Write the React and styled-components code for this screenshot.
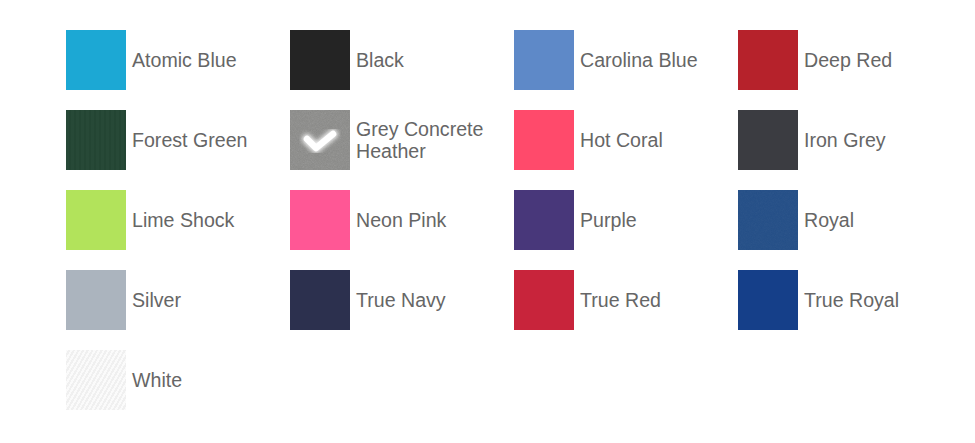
import React from "react";
import styled, { createGlobalStyle } from "styled-components";

const GlobalStyle = createGlobalStyle`
  html, body {
    margin: 0;
    padding: 0;
    background: #ffffff;
  }
`;

const colors = [
  { name: "Atomic Blue", hex: "#1ca8d4" },
  { name: "Black", hex: "#242424" },
  { name: "Carolina Blue", hex: "#5e89c8" },
  { name: "Deep Red", hex: "#b6222b" },
  { name: "Forest Green", hex: "#244634", texture: "lines" },
  { name: "Grey Concrete Heather", hex: "#8a8a88", texture: "noise", selected: true },
  { name: "Hot Coral", hex: "#ff4a6b" },
  { name: "Iron Grey", hex: "#3b3c41" },
  { name: "Lime Shock", hex: "#b2e35b" },
  { name: "Neon Pink", hex: "#ff5795" },
  { name: "Purple", hex: "#48377a" },
  { name: "Royal", hex: "#234e87", texture: "noise-light" },
  { name: "Silver", hex: "#abb4be" },
  { name: "True Navy", hex: "#2c304e" },
  { name: "True Red", hex: "#c8243b" },
  { name: "True Royal", hex: "#153f89" },
  { name: "White", hex: "#f0f0f0", texture: "diagonal" },
];

const textures = {
  lines:
    "repeating-linear-gradient(90deg, rgba(255,255,255,0.015) 0 3px, rgba(0,0,0,0.02) 3px 5px)",
  diagonal:
    "repeating-linear-gradient(120deg, rgba(255,255,255,0.7) 0 2px, rgba(255,255,255,0) 2px 4px)",
};

const Swatches = () => {
  return (
    <Grid>
      {colors.map((c) => (
        <Option key={c.name}>
          <Swatch color={c.hex} texture={textures[c.texture]}>
            {(c.texture === "noise" || c.texture === "noise-light") && (
              <Noise strength={c.texture === "noise" ? 0.22 : 0.06} />
            )}
            {c.selected && <Check />}
          </Swatch>
          <Label>{c.name}</Label>
        </Option>
      ))}
    </Grid>
  );
};

const Noise = ({ strength }) => (
  <NoiseSvg viewBox="0 0 60 60">
    <filter id={`n${strength}`}>
      <feTurbulence type="fractalNoise" baseFrequency="1.6" numOctaves="2" seed="4" />
      <feColorMatrix type="saturate" values="0" />
    </filter>
    <rect width="60" height="60" filter={`url(#n${strength})`} opacity={strength} />
  </NoiseSvg>
);

const Check = () => (
  <CheckSvg viewBox="0 0 60 60">
    <filter id="glow" x="-30%" y="-30%" width="160%" height="160%">
      <feGaussianBlur stdDeviation="2" />
    </filter>
    <path
      d="M17 29 L26 38 L43 24"
      fill="none"
      stroke="rgba(255,255,255,0.85)"
      strokeWidth="10"
      strokeLinecap="round"
      strokeLinejoin="round"
      filter="url(#glow)"
    />
    <path
      d="M17 29 L26 38 L43 24"
      fill="none"
      stroke="#ffffff"
      strokeWidth="6.5"
      strokeLinecap="round"
      strokeLinejoin="round"
    />
  </CheckSvg>
);

const Grid = styled.div`
  display: grid;
  grid-template-columns: repeat(4, 224px);
  row-gap: 20px;
  padding: 30px 0 0 66px;
  font-family: "Liberation Sans", Arial, sans-serif;
`;

const Option = styled.div`
  display: flex;
  align-items: center;
  gap: 6px;
  height: 60px;
`;

const Swatch = styled.div`
  position: relative;
  flex: 0 0 60px;
  width: 60px;
  height: 60px;
  background-color: ${(p) => p.color};
  background-image: ${(p) => p.texture || "none"};
  overflow: hidden;
`;

const NoiseSvg = styled.svg`
  position: absolute;
  inset: 0;
  width: 100%;
  height: 100%;
`;

const CheckSvg = styled.svg`
  position: absolute;
  inset: 0;
  width: 100%;
  height: 100%;
`;

const Label = styled.span`
  font-size: 19.6px;
  line-height: 22px;
  color: #666666;
  max-width: 150px;
`;

export default function App() {
  return (
    <>
      <GlobalStyle />
      <Swatches />
    </>
  );
}
